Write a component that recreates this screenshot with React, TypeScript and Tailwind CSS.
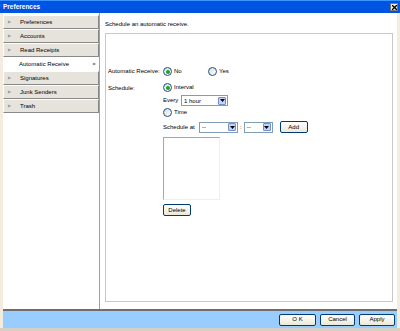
import React from 'react'

function Radio({ checked }: { checked?: boolean }) {
  return (
    <span className="inline-flex h-[9px] w-[9px] shrink-0 items-center justify-center rounded-full border border-[#1c5180] bg-gradient-to-br from-[#dcdcd6] to-white">
      {checked && <span className="h-[4px] w-[4px] rounded-full bg-[#21a121]" />}
    </span>
  )
}

function Select({ value, width }: { value: string; width: string }) {
  return (
    <div className={`flex h-[11px] items-center justify-between border border-[#7f9db9] bg-white pl-[2px] pr-[1px] ${width}`}>
      <span className="leading-none">{value}</span>
      <span className="flex h-[8px] w-[8px] items-center justify-center rounded-[1px] border border-[#7390c8] bg-[#c1d3fb]">
        <svg width="5" height="3" viewBox="0 0 5 3">
          <path d="M0 0h5L2.5 3z" fill="#000" />
        </svg>
      </span>
    </div>
  )
}

function Btn({ label, className = '' }: { label: string; className?: string }) {
  return (
    <div className={`flex h-[12px] items-center justify-center rounded-[2px] border border-[#003c74] bg-gradient-to-b from-white to-[#ece9d8] ${className}`}>
      {label}
    </div>
  )
}

export default function App() {
  const items = ['Preferences', 'Accounts', 'Read Receipts', 'Automatic Receive', 'Signatures', 'Junk Senders', 'Trash']

  return (
    <div className="flex h-[331px] w-[400px] flex-col whitespace-nowrap bg-[#f4ecdf] font-['Liberation_Sans',Arial,sans-serif] text-[6px] text-black">
      {/* title bar */}
      <div className="flex h-[13px] items-center justify-between border-t border-[#3d95ff] bg-[#0054e3] pl-[3px] pr-[2px]">
        <span className="text-[6.5px] font-bold text-white">Preferences</span>
        <span className="flex h-[8px] w-[8px] items-center justify-center border border-[#777] bg-[#ece9d8]">
          <svg width="5" height="5" viewBox="0 0 5 5">
            <path d="M0 0L5 5M5 0L0 5" stroke="#000" strokeWidth="1.3" />
          </svg>
        </span>
      </div>

      <div className="flex flex-1 pl-[3px] pr-[3px]">
        {/* sidebar */}
        <div className="flex w-[97px] flex-col border-r border-[#a0a0a0] bg-white pt-[2px]">
          {items.map((it) => {
            const sel = it === 'Automatic Receive'
            return (
              <div
                key={it}
                className={`flex h-[14px] items-center pl-[4px] pr-[3px] ${
                  sel ? 'bg-white' : 'border border-b-[#888] border-l-white border-r-[#888] border-t-white bg-[#e6e3dd]'
                }`}
              >
                <span className="w-[12px] text-[4px] text-[#999]">{sel ? '' : '▶'}</span>
                <span className="flex-1">{it}</span>
                {sel && <span className="text-[4px] text-[#888]">▶</span>}
              </div>
            )
          })}
        </div>

        {/* content */}
        <div className="flex flex-1 flex-col bg-white pb-[7px] pl-[5px] pr-[4px]">
          <div className="flex h-[20px] items-center pt-[2px]">Schedule an automatic receive.</div>
          <div className="flex-1 border border-[#c8c8c8] pl-[2px] pt-[33px]">
            <div className="flex items-center">
              <span className="w-[55px]">Automatic Receive:</span>
              <Radio checked />
              <span className="ml-[2px] w-[34px]">No</span>
              <Radio />
              <span className="ml-[2px]">Yes</span>
            </div>
            <div className="mt-[7px] flex">
              <span className="w-[55px] pt-[1px]">Schedule:</span>
              <div className="flex flex-col">
                <div className="flex items-center">
                  <Radio checked />
                  <span className="ml-[2px]">Interval</span>
                </div>
                <div className="mt-[3px] flex items-center">
                  <span className="w-[18px]">Every</span>
                  <Select value="1 hour" width="w-[47px]" />
                </div>
                <div className="mt-[2px] flex items-center">
                  <Radio />
                  <span className="ml-[2px]">Time</span>
                </div>
                <div className="mt-[4px] flex items-center">
                  <span className="w-[36px]">Schedule at</span>
                  <Select value="--" width="w-[39px]" />
                  <span className="mx-[2px]">:</span>
                  <Select value="--" width="w-[29px]" />
                  <Btn label="Add" className="ml-[7px] w-[28px]" />
                </div>
                <div className="mt-[4px] h-[63px] w-[57px] border border-[#aca899] border-b-[#f1efe2] border-r-[#f1efe2] bg-white" />
                <Btn label="Delete" className="mt-[4px] w-[28px]" />
              </div>
            </div>
          </div>
        </div>
      </div>

      {/* bottom bar */}
      <div className="mx-[3px] flex h-[19px] items-center justify-end gap-[4px] border-t-2 border-[#6f6f6f] bg-[#99ccff] pr-[2px]">
        <Btn label="O K" className="w-[37px]" />
        <Btn label="Cancel" className="w-[35px]" />
        <Btn label="Apply" className="w-[36px]" />
      </div>
      <div className="h-[3px] bg-[#d4d0c8]" />
    </div>
  )
}
